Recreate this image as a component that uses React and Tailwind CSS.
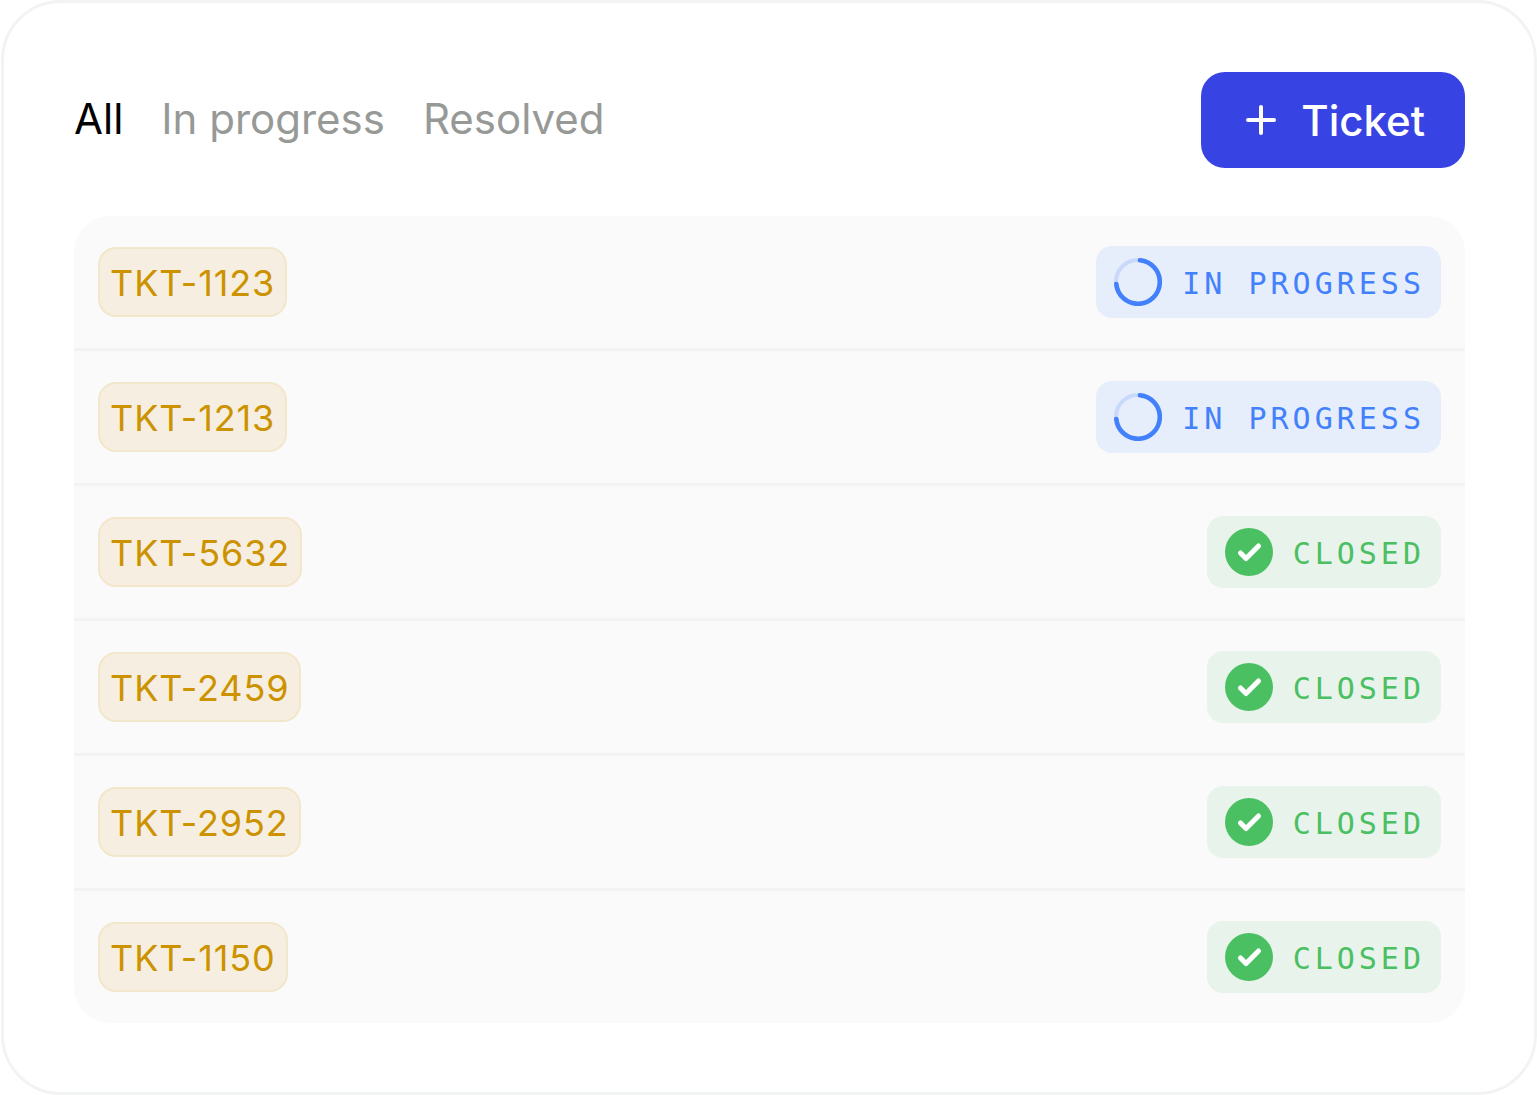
import React from "react";

const tickets = [
  { id: "TKT-1123", closed: false },
  { id: "TKT-1213", closed: false },
  { id: "TKT-5632", closed: true },
  { id: "TKT-2459", closed: true },
  { id: "TKT-2952", closed: true },
  { id: "TKT-1150", closed: true },
];

function Spinner() {
  return (
    <svg className="size-12" viewBox="0 0 48 48" fill="none" aria-hidden="true">
      <circle cx="24" cy="24" r="22" stroke="#c9d9fb" strokeWidth="4" />
      <path d="M26 2.3A21.8 21.8 0 1 1 2.3 26" stroke="#4281fb" strokeWidth="4.6" strokeLinecap="round" />
    </svg>
  );
}

function Check() {
  return (
    <svg className="size-12" viewBox="0 0 48 48" fill="none" aria-hidden="true">
      <circle cx="24" cy="24" r="24" fill="#4bc062" />
      <path d="M15.5 25l5.5 5.5L33.5 18" stroke="#fff" strokeWidth="5" strokeLinecap="round" strokeLinejoin="round" />
    </svg>
  );
}

function Status({ closed }) {
  const tone = closed ? "bg-[#e8f3eb] text-[#4bc062]" : "bg-[#e6edfb] text-[#4281fb]";
  return (
    <span className={"flex h-18 items-center gap-5 rounded-2xl pr-4 pl-4.5 font-['DejaVu_Sans_Mono',monospace] text-[30px] leading-9 tracking-[4px] " + tone}>
      {closed ? <Check /> : <Spinner />}
      <span className="pt-1">{closed ? "CLOSED" : "IN PROGRESS"}</span>
    </span>
  );
}

export default function App() {
  return (
    <main className="ml-px min-h-screen rounded-[60px] border-3 border-[#f2f3f3] bg-white pt-[69px] pr-[69px] pb-[69px] pl-[70px] font-['Inter',sans-serif]">
      <header className="flex items-center justify-between">
        <nav className="flex gap-[38px] pb-1 text-[42px] text-[#979997]">
          <button className="text-black">All</button>
          <button>In progress</button>
          <button>Resolved</button>
        </nav>
        <button className="flex h-24 items-center gap-5 rounded-3xl bg-[#3843e4] px-10 text-[42px] font-medium text-white">
          <svg className="size-10" viewBox="0 0 40 40" fill="none" stroke="currentColor" strokeWidth="4" strokeLinecap="round" aria-hidden="true">
            <path d="M20 7v26M7 20h26" />
          </svg>
          Ticket
        </button>
      </header>
      <ul className="mt-12 divide-y-3 divide-[#f2f3f3] overflow-hidden rounded-[36px] bg-[#fafafa]">
        {tickets.map((t) => (
          <li key={t.id} className="flex items-center justify-between px-6 py-[30px]">
            <span className="flex h-[70px] items-center rounded-[18px] border-2 border-[#f2e7cb] bg-[#f6efe1] px-2.5 pt-0.5 text-4xl tracking-wide text-[#cc9200]">{t.id}</span>
            <Status closed={t.closed} />
          </li>
        ))}
      </ul>
    </main>
  );
}
